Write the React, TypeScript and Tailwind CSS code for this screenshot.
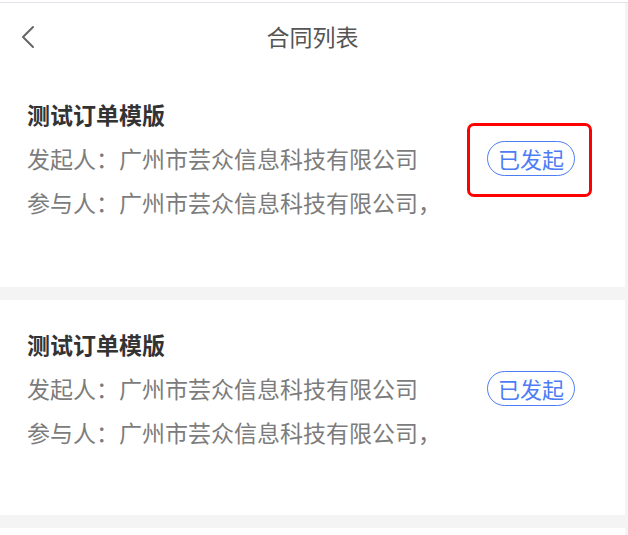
import React from "react";

const font = { fontFamily: '"Noto Sans CJK SC", "Noto Sans", sans-serif' };

function Badge({ highlight }: { highlight?: boolean }) {
  return (
    <div className="relative shrink-0">
      <div className="h-[35px] w-[88px] rounded-full border-[1.5px] border-[#4d7cf5] flex items-center justify-center text-[22px] leading-none text-[#4d7cf5]">
        已发起
      </div>
      {highlight && (
        <div className="absolute -left-[20px] -right-[17px] -top-[18px] -bottom-[21px] rounded-[7px] border-[3px] border-[#ff0000]" />
      )}
    </div>
  );
}

function Item({ highlight }: { highlight?: boolean }) {
  return (
    <div className="pl-[27px] pr-[50px] pt-[22px]">
      <div className="h-[44px] flex items-center text-[23px] font-bold text-[#333333]">测试订单模版</div>
      <div className="h-[44px] flex items-center justify-between text-[23px] text-[#7c7c7c]">
        <span>发起人：广州市芸众信息科技有限公司</span>
        <Badge highlight={highlight} />
      </div>
      <div className="h-[44px] flex items-center text-[23px] text-[#7c7c7c]">
        <span>参与人：广州市芸众信息科技有限公司，</span>
      </div>
    </div>
  );
}

export default function App() {
  return (
    <div className="w-[628px] h-[535px] overflow-hidden bg-[#f4f4f4] flex flex-col" style={font}>
      <div className="h-[2px] bg-white shrink-0" />
      <div className="h-px bg-[#e3e3ef] shrink-0" />
      <div className="bg-white mr-[3px] h-[284px] shrink-0 flex flex-col">
        <div className="h-[67px] relative flex items-center justify-center shrink-0">
          <svg className="absolute left-[19px] top-[21px]" width="18" height="26" viewBox="0 0 18 26" fill="none">
            <path d="M14 3 L4 13 L14 23" stroke="#666" strokeWidth="2" strokeLinecap="round" strokeLinejoin="round" />
          </svg>
          <span className="text-[23px] text-[#555555] -mt-[1px]">合同列表</span>
        </div>
        <Item highlight />
      </div>
      <div className="h-[13px] shrink-0" />
      <div className="bg-white mr-[3px] h-[215px] shrink-0">
        <Item />
      </div>
      <div className="h-[13px] shrink-0" />
      <div className="bg-white mr-[3px] flex-1" />
    </div>
  );
}
